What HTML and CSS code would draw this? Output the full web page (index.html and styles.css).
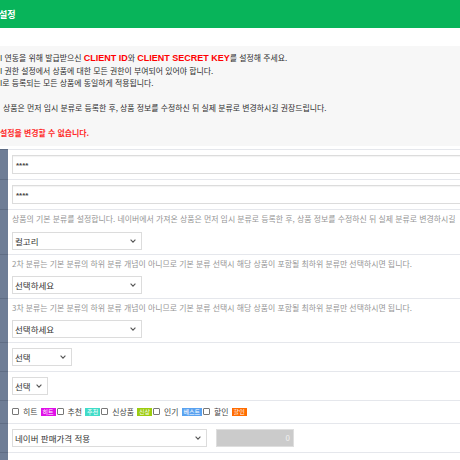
FILE: index.html
```html
<!DOCTYPE html>
<html lang="ko">
<head>
<meta charset="utf-8">
<link rel="stylesheet" href="styles.css">
</head>
<body>
<div class="header"><span>설정</span></div>
<div class="info">
  <p>I 연동을 위해 발급받으신 <b class="key">CLIENT ID</b>와 <b class="key">CLIENT SECRET KEY</b>를 설정해 주세요.</p>
  <p>I 권한 설정에서 상품에 대한 모든 권한이 부여되어 있어야 합니다.</p>
  <p>I로 등록되는 모든 상품에 동일하게 적용됩니다.</p>
  <p class="blank"></p>
  <p class="indent">상품은 먼저 임시 분류로 등록한 후, 상품 정보를 수정하신 뒤 실제 분류로 변경하시길 권장드립니다.</p>
  <p class="blank"></p>
  <p class="warn">설정을 변경할 수 없습니다.</p>
</div>
<div class="table">
  <div class="row"><div class="th"></div><div class="td"><div class="input">****</div></div></div>
  <div class="row"><div class="th"></div><div class="td"><div class="input">****</div></div></div>
  <div class="row"><div class="th"></div><div class="td dtd">
    <div class="desc first">상품의 기본 분류를 설정합니다. 네이버에서 가져온 상품은 먼저 임시 분류로 등록한 후, 상품 정보를 수정하신 뒤 실제 분류로 변경하시길</div>
    <div class="select w130"><span>컬고리</span><svg width="6" height="4" viewBox="0 0 6 4"><polyline points="0.6,0.6 3,3.1 5.4,0.6" fill="none" stroke="#555" stroke-width="1.1"/></svg></div>
  </div></div>
  <div class="row"><div class="th"></div><div class="td dtd">
    <div class="desc">2차 분류는 기본 분류의 하위 분류 개념이 아니므로 기본 분류 선택시 해당 상품이 포함될 최하위 분류만 선택하시면 됩니다.</div>
    <div class="select w130"><span>선택하세요</span><svg width="6" height="4" viewBox="0 0 6 4"><polyline points="0.6,0.6 3,3.1 5.4,0.6" fill="none" stroke="#555" stroke-width="1.1"/></svg></div>
  </div></div>
  <div class="row"><div class="th"></div><div class="td dtd">
    <div class="desc">3차 분류는 기본 분류의 하위 분류 개념이 아니므로 기본 분류 선택시 해당 상품이 포함될 최하위 분류만 선택하시면 됩니다.</div>
    <div class="select w130"><span>선택하세요</span><svg width="6" height="4" viewBox="0 0 6 4"><polyline points="0.6,0.6 3,3.1 5.4,0.6" fill="none" stroke="#555" stroke-width="1.1"/></svg></div>
  </div></div>
  <div class="row"><div class="th"></div><div class="td">
    <div class="select w60"><span>선택</span><svg width="6" height="4" viewBox="0 0 6 4"><polyline points="0.6,0.6 3,3.1 5.4,0.6" fill="none" stroke="#555" stroke-width="1.1"/></svg></div>
  </div></div>
  <div class="row"><div class="th"></div><div class="td">
    <div class="select w36"><span>선택</span><svg width="6" height="4" viewBox="0 0 6 4"><polyline points="0.6,0.6 3,3.1 5.4,0.6" fill="none" stroke="#555" stroke-width="1.1"/></svg></div>
  </div></div>
  <div class="row"><div class="th"></div><div class="td checks">
    <label class="chk"><span class="box"></span><span class="lbl">히트</span><span class="badge hit">히트</span></label>
    <label class="chk"><span class="box"></span><span class="lbl">추천</span><span class="badge rec">추천</span></label>
    <label class="chk"><span class="box"></span><span class="lbl">신상품</span><span class="badge new">신상</span></label>
    <label class="chk"><span class="box"></span><span class="lbl">인기</span><span class="badge best">베스트</span></label>
    <label class="chk"><span class="box"></span><span class="lbl">할인</span><span class="badge sale">할인</span></label>
  </div></div>
  <div class="row"><div class="th"></div><div class="td price">
    <div class="select w195"><span>네이버 판매가격 적용</span><svg width="6" height="4" viewBox="0 0 6 4"><polyline points="0.6,0.6 3,3.1 5.4,0.6" fill="none" stroke="#555" stroke-width="1.1"/></svg></div>
    <div class="disabled">0</div>
  </div></div>
  <div class="row last"><div class="th"></div><div class="td"></div></div>
</div>
</body>
</html>
```
FILE: styles.css
```css
html, body {
  margin: 0;
  padding: 0;
}
body {
  width: 460px;
  height: 460px;
  overflow: hidden;
  background: #fff;
  font-family: "Noto Sans CJK KR", "Noto Sans", sans-serif;
  color: #333;
}
.header {
  height: 28px;
  background: #08b45a;
  color: #fff;
  font-weight: bold;
  font-size: 9px;
  display: flex;
  align-items: center;
  margin-bottom: 18px;
}
.header span {
  margin-left: -1px;
}
.info {
  background: #f7f7f7;
  padding: 6px 0;
  font-size: 7.9px;
  line-height: 12.5px;
  color: #2e2e2e;
}
.info p {
  margin: 0;
  white-space: nowrap;
}
.info .blank {
  height: 12.5px;
}
.info .indent {
  padding-left: 3px;
}
.key {
  color: #ff0000;
  font-family: "Liberation Sans", Arial, sans-serif;
  font-size: 9px;
}
.warn {
  color: #ff2a2a;
  font-weight: bold;
}
.table {
  margin-top: 3px;
}
.row {
  display: flex;
}
.th {
  width: 8px;
  flex: none;
  background: #6e7d96;
  border-top: 1px solid #5f6d85;
}
.td {
  flex: 1;
  min-width: 0;
  overflow: hidden;
  border-top: 1px solid #e5e7ec;
  padding: 5px 0 5px 4px;
}
.dtd {
  padding: 3px 0 4px 4px;
}
.desc {
  font-size: 7.9px;
  line-height: 12px;
  color: #959595;
  white-space: nowrap;
  margin-bottom: 6px;
}
.desc.first {
  margin-bottom: 7px;
}
.input {
  height: 19px;
  box-sizing: border-box;
  width: calc(100% + 10px);
  border: 1px solid #dcdcdc;
  box-shadow: inset 0 1px 1px rgba(0, 0, 0, 0.05);
  background: #fff;
  display: flex;
  align-items: center;
  padding: 3px 0 0 3px;
  font-family: "Liberation Sans", Arial, sans-serif;
  font-weight: bold;
  font-size: 8px;
  color: #444;
}
.select {
  height: 18px;
  box-sizing: border-box;
  border: 1px solid #dcdcdc;
  background: #fff;
  display: flex;
  align-items: center;
  justify-content: space-between;
  padding: 0 5px 0 2px;
  font-size: 8.5px;
  color: #333;
  white-space: nowrap;
}
.w130 { width: 130px; }
.w60 { width: 60px; }
.w36 { width: 36px; }
.w195 { width: 195px; }
.checks {
  display: flex;
  align-items: center;
  height: 12px;
  font-size: 7.9px;
  color: #444;
}
.chk {
  display: flex;
  align-items: center;
  margin-right: 1px;
}
.box {
  width: 7px;
  height: 7px;
  box-sizing: border-box;
  border: 1px solid #777;
  border-radius: 1px;
  background: #fff;
  margin-right: 4px;
}
.lbl {
  margin-right: 3px;
}
.badge {
  display: inline-block;
  height: 8px;
  line-height: 8px;
  padding: 0 2px;
  font-size: 6px;
  color: #fff;
}
.hit { background: #e010e8; }
.rec { background: #40dcc8; }
.new { background: #9ccc10; }
.best { background: #5aa2f0; }
.sale { background: #ff6c00; }
.price {
  display: flex;
  align-items: center;
  gap: 9px;
}
.disabled {
  width: 78px;
  height: 18px;
  box-sizing: border-box;
  border: 1px solid #dedede;
  background: #cbcbcb;
  color: #f0f0f0;
  font-size: 8px;
  text-align: right;
  padding-right: 3px;
  line-height: 16px;
}
.last .th, .last .td {
  height: 10px;
}
```
